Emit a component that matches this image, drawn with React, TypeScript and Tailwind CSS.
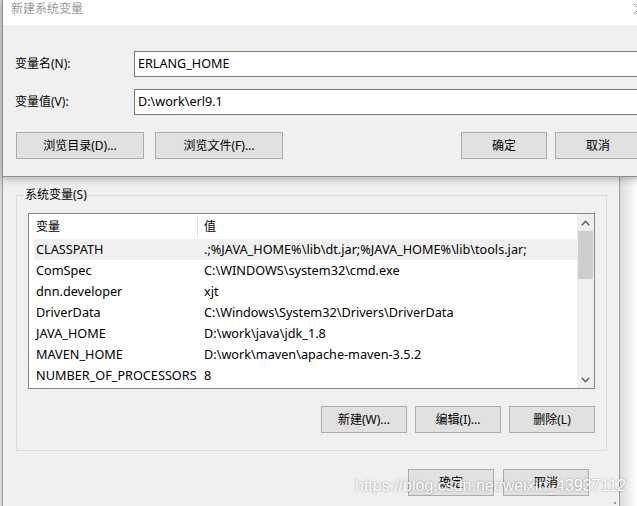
import React from 'react';

const rows = [
  { name: 'CLASSPATH', value: '.;%JAVA_HOME%\\lib\\dt.jar;%JAVA_HOME%\\lib\\tools.jar;', hot: true },
  { name: 'ComSpec', value: 'C:\\WINDOWS\\system32\\cmd.exe' },
  { name: 'dnn.developer', value: 'xjt' },
  { name: 'DriverData', value: 'C:\\Windows\\System32\\Drivers\\DriverData' },
  { name: 'JAVA_HOME', value: 'D:\\work\\java\\jdk_1.8' },
  { name: 'MAVEN_HOME', value: 'D:\\work\\maven\\apache-maven-3.5.2' },
  { name: 'NUMBER_OF_PROCESSORS', value: '8' },
];

function Btn({ label, w = 'w-[86px]', className = '' }: { label: string; w?: string; className?: string }) {
  return (
    <button
      className={`${w} h-[27px] shrink-0 border border-[#adadad] bg-[#e1e1e1] text-[12px] leading-[16px] text-black ${className}`}
    >
      {label}
    </button>
  );
}

function Chevron({ up }: { up?: boolean }) {
  return (
    <svg width="9" height="6" viewBox="0 0 9 6" fill="none" stroke="#606060" strokeWidth="1.5">
      {up ? <path d="M0.8 5.2L4.5 1.3L8.2 5.2" /> : <path d="M0.8 0.8L4.5 4.7L8.2 0.8" />}
    </svg>
  );
}

export default function App() {
  return (
    <div className="relative w-[637px] h-[506px] overflow-hidden bg-white text-black font-['Noto_Sans','Noto_Sans_CJK_SC',sans-serif] text-[12px] leading-[16px]">
      {/* 背后的 环境变量 窗口 */}
      <div className="flex h-full">
        <div className="w-[2px] shrink-0 bg-[#d6d6d6]" />
        <div className="w-[618px] shrink-0 border-x border-[#9c9c9c] bg-[#f0f0f0] flex flex-col">
          <div className="relative mt-[195px] ml-[13px] w-[591px] h-[256px] border border-[#dcdcdc] pt-[17px] px-[11px]">
            <span className="absolute left-[7px] top-[-9px] px-[1px] bg-[#f0f0f0]">系统变量(S)</span>

            <div className="flex w-[567px] h-[176px] border border-[#828790] bg-white">
              <div className="flex-1 flex flex-col">
                <div className="h-[25px] ml-[5px] flex items-center">
                  <div className="w-[163px] pl-[2px]">变量</div>
                  <div className="w-px h-[23px] bg-[#e5e5e5]" />
                  <div className="pl-[6px]">值</div>
                </div>
                {rows.map((r) => (
                  <div
                    key={r.name}
                    className={`h-[21px] ml-[5px] pb-[1px] flex items-center whitespace-nowrap text-[12.7px] ${r.hot ? 'bg-[#f0f0f0]' : ''}`}
                  >
                    <div className="w-[163px] pl-[2px]">{r.name}</div>
                    <div className="pl-[7px]">{r.value}</div>
                  </div>
                ))}
              </div>
              <div className="w-[17px] bg-[#f0f0f0] flex flex-col">
                <div className="h-[17px] flex items-center justify-center">
                  <Chevron up />
                </div>
                <div className="ml-[1px] w-[15px] h-[48px] bg-[#cdcdcd]" />
                <div className="flex-1" />
                <div className="h-[17px] flex items-center justify-center">
                  <Chevron />
                </div>
              </div>
            </div>

            <div className="mt-[17px] flex justify-end gap-[8px]">
              <Btn label="新建(W)..." />
              <Btn label="编辑(I)..." />
              <Btn label="删除(L)" />
            </div>
          </div>

          <div className="mt-[18px] pr-[30px] flex justify-end gap-[9px]">
            <Btn label="确定" />
            <Btn label="取消" />
          </div>
        </div>
        <div className="flex-1 bg-gradient-to-r from-[#dcdcdc] to-white" />
      </div>

      {/* 新建系统变量 对话框 */}
      <div className="absolute left-[2px] top-0 w-[650px] h-[177px] border-l border-b border-[#8f8f8f] bg-[#f0f0f0] shadow-[0_2px_8px_rgba(0,0,0,0.28)]">
        <div className="h-[25px] bg-white flex justify-between pl-[8px] pr-[8px] pt-[1px]">
          <span className="text-[#999999]">新建系统变量</span>
          <svg width="10" height="10" viewBox="0 0 10 10" stroke="#8a8a8a" strokeWidth="1" className="mt-[3px]">
            <path d="M0 0L10 10M10 0L0 10" />
          </svg>
        </div>
        <div className="pt-[26px]">
          <div className="flex items-center pl-[12px]">
            <div className="w-[119px]">变量名(N):</div>
            <div className="flex-1 h-[26px] border border-[#7a7a7a] bg-white pl-[3px] flex items-center text-[12.6px]">ERLANG_HOME</div>
          </div>
          <div className="mt-[12px] flex items-center pl-[12px]">
            <div className="w-[119px]">变量值(V):</div>
            <div className="flex-1 h-[26px] border border-[#7a7a7a] bg-white pl-[3px] flex items-center text-[12.6px]">D:\work\erl9.1</div>
          </div>
          <div className="mt-[17px] flex pl-[13px] pr-[11px]">
            <Btn label="浏览目录(D)..." w="w-[128px]" />
            <Btn label="浏览文件(F)..." w="w-[128px]" className="ml-[11px]" />
            <Btn label="确定" className="ml-auto" />
            <Btn label="取消" className="ml-[8px]" />
          </div>
        </div>
      </div>

      <div className="absolute left-[614px] top-[502px] w-[2px] h-[2px] bg-[#9a9a9a]" />

      {/* 水印 */}
      <div className="absolute left-[355px] top-[476px] font-['Liberation_Sans',Arial,sans-serif] text-[16px] leading-[20px] text-white [text-shadow:0_0_2px_rgba(0,0,0,0.45)] whitespace-nowrap">
        https://blog.csdn.net/weixin_43937112
      </div>
    </div>
  );
}
